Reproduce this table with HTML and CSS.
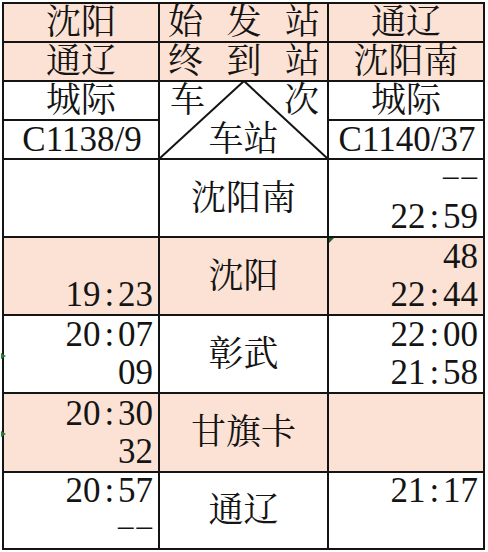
FILE: index.html
```html
<!DOCTYPE html>
<html lang="zh-CN">
<head>
<meta charset="utf-8">
<title>沈阳—通辽 城际时刻表</title>
<link rel="stylesheet" href="styles.css">
</head>
<body>
<div class="sheet">
  <div class="grid">
    <div class="cell pink name">沈阳</div>
    <div class="cell pink spread"><span>始</span><span>发</span><span>站</span></div>
    <div class="cell pink name">通辽</div>

    <div class="cell pink name">通辽</div>
    <div class="cell pink spread"><span>终</span><span>到</span><span>站</span></div>
    <div class="cell pink name">沈阳南</div>

    <div class="cell name">城际</div>
    <div class="cell corner">
      <svg class="diag" viewBox="0 0 167 76" preserveAspectRatio="none" aria-hidden="true">
        <line x1="84" y1="-1" x2="-1" y2="77"/>
        <line x1="84" y1="-1" x2="168" y2="77"/>
      </svg>
      <div class="corner-top"><span>车</span><span>次</span></div>
      <div class="corner-bottom">车站</div>
    </div>
    <div class="cell name">城际</div>

    <div class="cell name num">C1138/9</div>
    <div class="cell name num">C1140/37</div>

    <!-- 沈阳南 -->
    <div class="cell time"></div>
    <div class="cell station">沈阳南</div>
    <div class="cell time">
      <div class="ln"><span class="dash">––</span></div>
      <div class="ln">22<span class="c">:</span>59</div>
    </div>

    <!-- 沈阳 -->
    <div class="cell pink time">
      <div class="ln">19<span class="c">:</span>23</div>
    </div>
    <div class="cell pink station">沈阳</div>
    <div class="cell pink time flag">
      <div class="ln">48</div>
      <div class="ln">22<span class="c">:</span>44</div>
    </div>

    <!-- 彰武 -->
    <div class="cell time mark">
      <div class="ln">20<span class="c">:</span>07</div>
      <div class="ln">09</div>
    </div>
    <div class="cell station">彰武</div>
    <div class="cell time">
      <div class="ln">22<span class="c">:</span>00</div>
      <div class="ln">21<span class="c">:</span>58</div>
    </div>

    <!-- 甘旗卡 -->
    <div class="cell pink time mark">
      <div class="ln">20<span class="c">:</span>30</div>
      <div class="ln">32</div>
    </div>
    <div class="cell pink station">甘旗卡</div>
    <div class="cell pink time"></div>

    <!-- 通辽 -->
    <div class="cell time">
      <div class="ln">20<span class="c">:</span>57</div>
      <div class="ln"><span class="dash">––</span></div>
    </div>
    <div class="cell station">通辽</div>
    <div class="cell time">
      <div class="ln">21<span class="c">:</span>17</div>
      <div class="ln">&nbsp;</div>
    </div>
  </div>
</div>
</body>
</html>
```

FILE: styles.css
```css
html, body {
  margin: 0;
  padding: 0;
  background: #ffffff;
}

body {
  font-family: "Liberation Serif", "Noto Serif CJK SC", "Noto Sans CJK SC", serif;
  font-size: 35px;
  color: #141414;
}

.sheet {
  padding: 2px 0 0 2px;
}

.grid {
  display: grid;
  grid-template-columns: 154px 167px 154px;
  grid-template-rows: 37px 37px 37px 37px 76px 76px 76px 77px 75px;
  gap: 2px;
  padding: 2px;
  width: 479px;
  background: #141414;
}

.cell {
  background: #ffffff;
  position: relative;
  overflow: visible;
  line-height: 37px;
  white-space: nowrap;
}

.pink {
  background: #fce2d4;
}

.name {
  display: flex;
  justify-content: center;
  align-items: flex-end;
}

.num {
  padding-left: 2px;
}

.spread {
  display: flex;
  justify-content: space-between;
  align-items: flex-end;
  padding: 0 7px 0 8px;
}

.corner {
  grid-row: span 2;
  display: flex;
  flex-direction: column;
  justify-content: space-between;
}

.corner-top {
  display: flex;
  justify-content: space-between;
  padding: 0 8px 0 10px;
}

.corner-bottom {
  text-align: center;
}

.diag {
  position: absolute;
  left: 0;
  top: 0;
  width: 100%;
  height: 100%;
  overflow: visible;
}

.diag line {
  stroke: #141414;
  stroke-width: 2;
  vector-effect: non-scaling-stroke;
}

.station {
  display: flex;
  justify-content: center;
  align-items: center;
}

.time {
  display: flex;
  flex-direction: column;
  justify-content: flex-end;
  align-items: flex-end;
  padding-right: 5px;
}

.ln {
  line-height: 38px;
  height: 38px;
}

.c {
  display: inline-block;
  width: 0.5em;
  text-align: center;
}

.dash {
  font-size: 31px;
  line-height: 31px;
  letter-spacing: 3px;
  position: relative;
  top: -4px;
  margin-right: -2px;
}

.mark::before {
  content: "";
  position: absolute;
  left: -3px;
  top: 37px;
  border-top: 3px solid transparent;
  border-bottom: 3px solid transparent;
  border-left: 5px solid #2f7a3a;
}

.flag::before {
  content: "";
  position: absolute;
  left: 0;
  top: 0;
  border-top: 5px solid #1f5e2a;
  border-right: 5px solid transparent;
}
```
